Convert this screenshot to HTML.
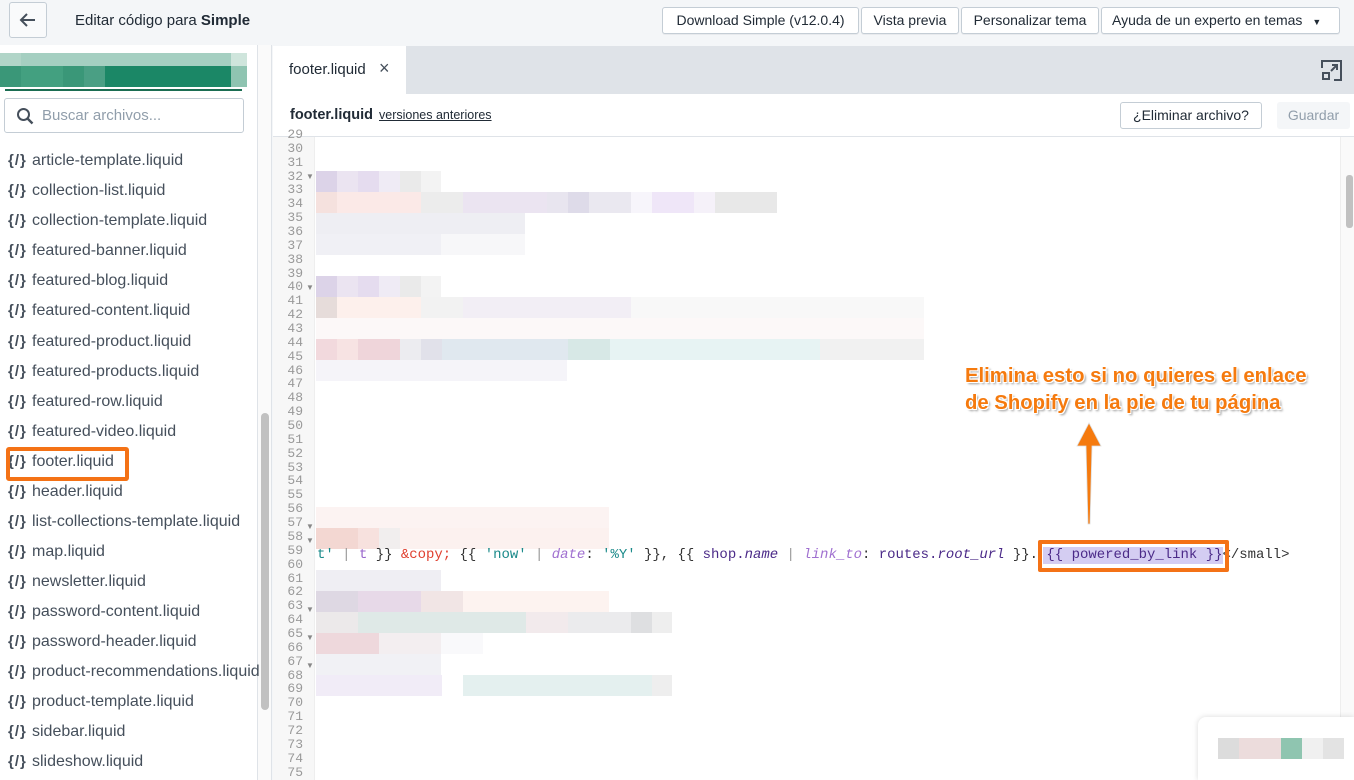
<!DOCTYPE html>
<html><head><meta charset="utf-8">
<style>
*{box-sizing:border-box;margin:0;padding:0}
body{width:1354px;height:780px;overflow:hidden;background:#f4f6f8;font-family:"Liberation Sans",sans-serif;color:#212b36;position:relative}
.abs{position:absolute}
.btn{position:absolute;top:7px;height:27px;background:#fff;border:1px solid #c4cdd5;border-radius:3px;font-size:14px;line-height:25px;text-align:center;color:#212b36;box-shadow:0 1px 0 rgba(22,29,37,.05)}
.file{position:absolute;left:8px;font-size:16px;color:#454f5b;white-space:nowrap}
.file b{display:inline-block;width:24px;font-weight:bold;color:#454f5b;letter-spacing:1px;font-size:15px}
.ln{position:absolute;left:273px;width:30px;text-align:right;font-family:"Liberation Mono",monospace;font-size:13px;color:#999;line-height:13.86px}
.row{position:absolute;height:21px}
.code{position:absolute;left:317px;top:547px;font-family:"Liberation Mono",monospace;font-size:13.97px;white-space:pre;color:#333;line-height:16px}
.ann{position:absolute;left:965px;font-size:20.3px;font-weight:bold;color:#f57a0e;text-shadow:1px 1px 0 #fff,-1px -1px 0 #fff,1px -1px 0 #fff,-1px 1px 0 #fff,2px 2px 2px #999;white-space:nowrap}
</style></head><body>
<div class="abs" style="left:9px;top:2px;width:38px;height:36px;border:1px solid #c4cdd5;border-radius:3px;background:#f9fafb"></div>
<svg class="abs" style="left:18px;top:10px" width="20" height="20" viewBox="0 0 20 20"><path d="M17 10H4M9 4L3 10l6 6" stroke="#454f5b" stroke-width="2" fill="none"/></svg>
<div class="abs" style="left:75px;top:12px;font-size:15px">Editar código para <b>Simple</b></div>
<div class="btn" style="left:662px;width:197px">Download Simple (v12.0.4)</div>
<div class="btn" style="left:861px;width:98px">Vista previa</div>
<div class="btn" style="left:961px;width:138px">Personalizar tema</div>
<div class="btn" style="left:1101px;width:239px;text-align:left;padding-left:10px">Ayuda de un experto en temas <span style="font-size:9px;margin-left:6px">▼</span></div>

<div class="abs" style="left:0;top:45px;width:258px;height:735px;background:#fff;border-right:1px solid #dfe3e8"></div>
<div class="abs" style="left:258px;top:45px;width:14px;height:735px;background:#fafafa;border-right:1px solid #dfe3e8"></div>
<div class="abs" style="left:261px;top:413px;width:8px;height:297px;background:#c1c1c1;border-radius:4px"></div>
<div class="abs" style="left:0;top:53px;width:247px;height:13px;background:linear-gradient(90deg,#b1d5c8 0 21px,#a5cfc1 21px 231px,#cfe5dc 231px)"></div>
<div class="abs" style="left:0;top:66px;width:247px;height:21px;background:linear-gradient(90deg,#3a9778 0 21px,#43a080 21px 63px,#3a9778 63px 84px,#4a9f84 84px 105px,#1b8766 105px 231px,#8fc4b1 231px)"></div>
<div class="abs" style="left:5px;top:89px;width:237px;height:2px;background:#1b6d52"></div>
<div class="abs" style="left:4px;top:98px;width:240px;height:35px;border:1px solid #c4cdd5;border-radius:3px;background:#fff"></div>
<svg class="abs" style="left:16px;top:107px" width="18" height="18" viewBox="0 0 18 18"><circle cx="7.5" cy="7.5" r="5.5" stroke="#454f5b" stroke-width="2" fill="none"/><path d="M11.5 11.5l5 5" stroke="#454f5b" stroke-width="2.4"/></svg>
<div class="abs" style="left:42px;top:107px;font-size:15px;color:#919eab">Buscar archivos...</div>

<div class="file" style="top:152px"><b>{/}</b>article-template.liquid</div>
<div class="file" style="top:182px"><b>{/}</b>collection-list.liquid</div>
<div class="file" style="top:212px"><b>{/}</b>collection-template.liquid</div>
<div class="file" style="top:242px"><b>{/}</b>featured-banner.liquid</div>
<div class="file" style="top:272px"><b>{/}</b>featured-blog.liquid</div>
<div class="file" style="top:302px"><b>{/}</b>featured-content.liquid</div>
<div class="file" style="top:333px"><b>{/}</b>featured-product.liquid</div>
<div class="file" style="top:363px"><b>{/}</b>featured-products.liquid</div>
<div class="file" style="top:393px"><b>{/}</b>featured-row.liquid</div>
<div class="file" style="top:423px"><b>{/}</b>featured-video.liquid</div>
<div class="file" style="top:453px"><b>{/}</b>footer.liquid</div>
<div class="abs" style="left:6px;top:447px;width:123px;height:34px;border:4px solid #f47216;border-radius:3px"></div>
<div class="file" style="top:483px"><b>{/}</b>header.liquid</div>
<div class="file" style="top:513px"><b>{/}</b>list-collections-template.liquid</div>
<div class="file" style="top:543px"><b>{/}</b>map.liquid</div>
<div class="file" style="top:573px"><b>{/}</b>newsletter.liquid</div>
<div class="file" style="top:603px"><b>{/}</b>password-content.liquid</div>
<div class="file" style="top:633px"><b>{/}</b>password-header.liquid</div>
<div class="file" style="top:663px"><b>{/}</b>product-recommendations.liquid</div>
<div class="file" style="top:693px"><b>{/}</b>product-template.liquid</div>
<div class="file" style="top:723px"><b>{/}</b>sidebar.liquid</div>
<div class="file" style="top:753px"><b>{/}</b>slideshow.liquid</div>

<div class="abs" style="left:273px;top:46px;width:1081px;height:48px;background:#dfe3e8"></div>
<div class="abs" style="left:273px;top:46px;width:133px;height:48px;background:#fff"></div>
<div class="abs" style="left:289px;top:61px;font-size:15px">footer.liquid</div>
<div class="abs" style="left:379px;top:58px;font-size:18px;color:#454f5b">×</div>
<svg class="abs" style="left:1321px;top:60px" width="21" height="21" viewBox="0 0 21 21"><path d="M1 8V1h19v19h-7" stroke="#454f5b" stroke-width="2" fill="none"/><rect x="2" y="13" width="6" height="6" stroke="#454f5b" stroke-width="2" fill="none"/><path d="M10 11l6-6M11 5h5v5" stroke="#454f5b" stroke-width="2" fill="none"/></svg>
<div class="abs" style="left:273px;top:94px;width:1081px;height:43px;background:#fff;border-bottom:1px solid #dfe3e8"></div>
<div class="abs" style="left:290px;top:107px;font-size:14.5px;font-weight:bold">footer.liquid</div>
<div class="abs" style="left:379px;top:108px;font-size:12.5px;text-decoration:underline">versiones anteriores</div>
<div class="abs" style="left:1120px;top:102px;width:142px;height:27px;border:1px solid #c4cdd5;border-radius:3px;font-size:14px;line-height:25px;text-align:center">¿Eliminar archivo?</div>
<div class="abs" style="left:1277px;top:102px;width:73px;height:27px;background:#f4f6f8;border-radius:3px;font-size:14px;line-height:27px;text-align:center;color:#919eab">Guardar</div>

<div class="abs" style="left:273px;top:137px;width:1081px;height:643px;background:#fff"></div>
<div class="abs" style="left:273px;top:137px;width:42px;height:643px;background:#f7f7f7;border-right:1px solid #eee"></div>
<div class="abs" style="left:1340px;top:137px;width:14px;height:643px;background:#fafafa;border-left:1px solid #eee"></div>
<div class="abs" style="left:1346px;top:175px;width:7px;height:53px;background:#c1c1c1;border-radius:3px"></div>

<div class="ln" style="top:128px">29<br>30<br>31<br>32<br>33<br>34<br>35<br>36<br>37<br>38<br>39<br>40<br>41<br>42<br>43<br>44<br>45<br>46<br>47<br>48<br>49<br>50<br>51<br>52<br>53<br>54<br>55<br>56<br>57<br>58<br>59<br>60<br>61<br>62<br>63<br>64<br>65<br>66<br>67<br>68<br>69<br>70<br>71<br>72<br>73<br>74<br>75</div>
<div class="abs" style="left:306px;top:170px;font-size:8px;color:#888;line-height:13.86px">▼<br><br><br><br><br><br><br><br>▼</div>
<div class="abs" style="left:306px;top:520px;font-size:8px;color:#888;line-height:13.86px">▼<br>▼<br><br><br><br><br>▼<br><br>▼<br><br>▼</div>

<div class="row" style="left:316px;top:171px;width:125px;background:linear-gradient(90deg,#dcd3e8 0 21px,#ebe4f1 21px 42px,#e5dcef 42px 63px,#efebf5 63px 84px,#eaeaea 84px 105px,#f3f3f3 105px)"></div>
<div class="row" style="left:316px;top:192px;width:461px;background:linear-gradient(90deg,#f5e1de 0 21px,#fbe9e7 21px 105px,#ececec 105px 147px,#ebe4f1 147px 231px,#e8e5ef 231px 252px,#dedbe9 252px 273px,#eae8f0 273px 315px,#f7f5fb 315px 336px,#efe6f8 336px 378px,#f5f1f9 378px 399px,#e8e8e8 399px)"></div>
<div class="row" style="left:316px;top:213px;width:209px;background:#eeeef3"></div>
<div class="row" style="left:316px;top:234px;width:209px;background:linear-gradient(90deg,#f0f0f5 0 125px,#f7f7f9 125px)"></div>
<div class="row" style="left:316px;top:276px;width:125px;background:linear-gradient(90deg,#dcd3e8 0 21px,#ebe4f1 21px 42px,#e5dcef 42px 63px,#efebf5 63px 84px,#eaeaea 84px 105px,#f3f3f3 105px)"></div>
<div class="row" style="left:316px;top:297px;width:608px;background:linear-gradient(90deg,#e6dcda 0 21px,#fdf0ec 21px 105px,#f2f2f2 105px 147px,#f2eef5 147px 315px,#f8f8f8 315px)"></div>
<div class="row" style="left:316px;top:318px;width:608px;background:#fcf8f8"></div>
<div class="row" style="left:316px;top:339px;width:608px;background:linear-gradient(90deg,#f2d9dd 0 21px,#f7e3e3 21px 42px,#efd5da 42px 84px,#ececf0 84px 105px,#e1e1ea 105px 126px,#e0e8ef 126px 252px,#d7e8e6 252px 294px,#e7f3f3 294px 504px,#f1f1f1 504px)"></div>
<div class="row" style="left:316px;top:360px;width:251px;background:#f5f4f9"></div>
<div class="row" style="left:316px;top:507px;width:293px;background:#fcf3f2"></div>
<div class="row" style="left:316px;top:528px;width:293px;background:linear-gradient(90deg,#f3d7d2 0 42px,#f7e1de 42px 63px,#f1eeee 63px 84px,#fcf1ef 84px)"></div>
<div class="row" style="left:316px;top:570px;width:125px;background:#efeef3"></div>
<div class="row" style="left:316px;top:591px;width:293px;background:linear-gradient(90deg,#ded8e3 0 42px,#e7d9e8 42px 105px,#f1e5e5 105px 147px,#fdf3f0 147px)"></div>
<div class="row" style="left:316px;top:612px;width:356px;background:linear-gradient(90deg,#ece9ea 0 42px,#dfe9e7 42px 210px,#f2eaec 210px 252px,#ebebed 252px 315px,#dedfe1 315px 336px,#eeeeee 336px)"></div>
<div class="row" style="left:316px;top:633px;width:167px;background:linear-gradient(90deg,#eed8dc 0 63px,#f3eef0 63px 125px,#f9f9fb 125px)"></div>
<div class="row" style="left:316px;top:654px;width:125px;background:#f1f1f5"></div>
<div class="row" style="left:316px;top:675px;width:356px;background:linear-gradient(90deg,#f1ecf7 0 126px,#fff 126px 147px,#e4f0ef 147px 336px,#eeeeee 336px)"></div>

<div class="abs" style="left:1043px;top:547px;width:180px;height:17px;background:#d4cdf2"></div>
<div class="code"><span style="color:#1a8a8a">t'</span> <span style="color:#999">|</span> <span style="color:#9966cc">t</span> }} <span style="color:#e04030">&amp;copy;</span> {{ <span style="color:#1a8a8a">'now'</span> <span style="color:#999">|</span> <i style="color:#a070d0">date</i>: <span style="color:#1a8a8a">'%Y'</span> }}, {{ <span style="color:#4b2a88">shop.<i>name</i></span> <span style="color:#999">|</span> <i style="color:#a070d0">link_to</i>: <span style="color:#4b2a88">routes.<i>root_url</i></span> }}. <span style="color:#4b2a88">{{ powered_by_link }}</span>&lt;/small&gt;</div>
<div class="abs" style="left:1038px;top:540px;width:191px;height:32px;border:4px solid #f47216;border-radius:2px"></div>

<div class="ann" style="top:365px">Elimina esto si no quieres el enlace</div>
<div class="ann" style="top:392px">de Shopify en la pie de tu página</div>
<svg class="abs" style="left:1074px;top:420px" width="30" height="108" viewBox="0 0 30 108"><path d="M15 3L3 26h9l2 78h2l2-78h9z" fill="#f57a0e" stroke="#ddd" stroke-width="0.8"/></svg>

<div class="abs" style="left:1198px;top:717px;width:156px;height:63px;background:#fff;border-radius:8px 0 0 0;box-shadow:0 0 6px rgba(0,0,0,.15)"></div>
<div class="abs" style="left:1218px;top:738px;width:126px;height:21px;background:linear-gradient(90deg,#dcdcdc 0 21px,#ecdcdc 21px 63px,#8fc5b0 63px 84px,#f0f0f0 84px 105px,#e3e3e3 105px)"></div>
</body></html>
